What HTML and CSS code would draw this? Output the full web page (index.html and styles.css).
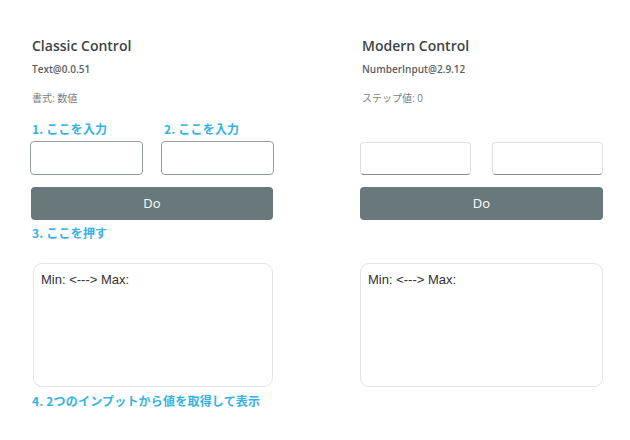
FILE: index.html
```html
<!DOCTYPE html>
<html lang="ja">
<head>
<meta charset="utf-8">
<link rel="stylesheet" href="styles.css">
</head>
<body>
<div class="page">
  <section class="col classic">
    <h1 class="title">Classic Control</h1>
    <div class="sub">Text@0.0.51</div>
    <div class="meta">書式: 数値</div>
    <div class="labels">
      <span class="step first">1. ここを入力</span>
      <span class="step">2. ここを入力</span>
    </div>
    <div class="inputs">
      <div class="input"></div>
      <div class="input"></div>
    </div>
    <div class="btn">Do</div>
    <div class="step step3">3. ここを押す</div>
    <div class="box">Min: &lt;---&gt; Max:</div>
    <div class="step step4">4. 2つのインプットから値を取得して表示</div>
  </section>
  <section class="col modern">
    <h1 class="title">Modern Control</h1>
    <div class="sub">NumberInput@2.9.12</div>
    <div class="meta">ステップ値: 0</div>
    <div class="labels"></div>
    <div class="inputs">
      <div class="input"></div>
      <div class="input"></div>
    </div>
    <div class="btn">Do</div>
    <div class="step step3"></div>
    <div class="box">Min: &lt;---&gt; Max:</div>
  </section>
</div>
</body>
</html>
```
FILE: styles.css
```css
html, body {
  margin: 0;
  padding: 0;
  background: #ffffff;
}
body {
  font-family: "Open Sans", "Noto Sans CJK JP", sans-serif;
  width: 630px;
  height: 440px;
  overflow: hidden;
}
.page {
  display: grid;
  grid-template-columns: 244px 243px;
  column-gap: 86px;
  padding: 36px 0 0 30px;
}
.col {
  display: flex;
  flex-direction: column;
}
.title {
  margin: 0 0 0 2px;
  font-size: 14px;
  line-height: 20px;
  font-weight: 600;
  color: #3b4447;
}
.sub {
  margin: 6px 0 0 2px;
  font-size: 10px;
  line-height: 14px;
  font-weight: 600;
  color: #5a6164;
}
.meta {
  margin: 15px 0 0 2px;
  font-size: 10px;
  line-height: 14px;
  color: #7a7f82;
}
.labels {
  display: flex;
  height: 16px;
  margin: 16px 0 0 2px;
}
.step {
  font-family: "Noto Sans CJK JP", sans-serif;
  font-size: 12px;
  line-height: 16px;
  font-weight: 700;
  letter-spacing: 0.2px;
  color: #35b2e3;
}
.first {
  width: 132px;
}
.inputs {
  display: flex;
  justify-content: space-between;
  margin-top: 4px;
}
.input {
  box-sizing: border-box;
  width: 113px;
  height: 34px;
  border: 1px solid #939b9f;
  border-radius: 4px;
  background: #fff;
}
.modern .inputs { margin-top: 5px; }
.modern .input {
  width: 111px;
  height: 33px;
  border: 1px solid #e0e0e0;
  border-bottom: 1px solid #8a8a8a;
}
.btn {
  margin: 12px 1px 0 1px;
  height: 33px;
  border-radius: 4px;
  background: #69797b;
  color: #ffffff;
  font-size: 13px;
  line-height: 33px;
  text-align: center;
}
.modern .btn { margin: 12px 0 0 0; }
.step3 {
  margin: 5px 0 0 2px;
  height: 16px;
}
.box {
  box-sizing: border-box;
  margin: 22px 1px 0 3px;
  height: 124px;
  border: 1px solid #e2e5e6;
  border-radius: 9px;
  padding: 8px 7px;
  font-family: "Liberation Sans", sans-serif;
  font-size: 13px;
  line-height: 16px;
  color: #333333;
}
.modern .box { margin: 22px 0 0 0; }
.step4 {
  margin: 6px 0 0 2px;
}
```
